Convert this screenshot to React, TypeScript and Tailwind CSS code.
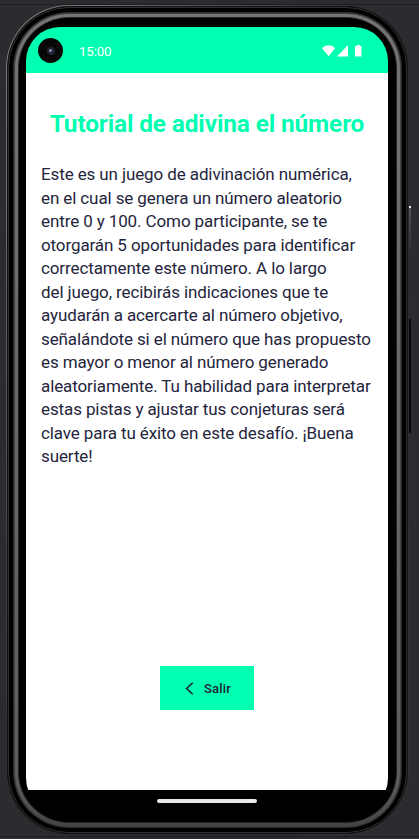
import React from "react";

const LINES = [
  "Este es un juego de adivinación numérica,",
  "en el cual se genera un número aleatorio",
  "entre 0 y 100. Como participante, se te",
  "otorgarán 5 oportunidades para identificar",
  "correctamente este número. A lo largo",
  "del juego, recibirás indicaciones que te",
  "ayudarán a acercarte al número objetivo,",
  "señalándote si el número que has propuesto",
  "es mayor o menor al número generado",
  "aleatoriamente. Tu habilidad para interpretar",
  "estas pistas y ajustar tus conjeturas será",
  "clave para tu éxito en este desafío. ¡Buena",
  "suerte!",
];

function StatusBar() {
  return (
    <header className="flex h-[46px] shrink-0 items-center bg-[#00ffb0] pl-3 pr-[25px] text-white">
      <div className="mt-[1px] flex size-[25px] items-center justify-center rounded-full bg-[#080808]">
        <div className="flex size-[8px] items-center justify-center rounded-full bg-[#202332]">
          <div className="size-[3px] rounded-full bg-[#8490b5]" />
        </div>
      </div>
      <span className="ml-4 mt-[3px] text-[13.3px] leading-4 tracking-[-0.15px]">15:00</span>
      <svg className="ml-auto mt-[2px]" width="41" height="12" viewBox="0 0 41 12" fill="white">
        <path d="M0 3.2C3.8-.7 9.4-.7 13.2 3.2L6.6 11.3Z" />
        <path d="M26 0V11.6H15Z" />
        <path d="M33.5 1H35V0H38V1H39.5V11.6H33V1Z" />
      </svg>
    </header>
  );
}

function Screen() {
  return (
    <div className="flex h-[785px] w-[362px] flex-col overflow-hidden rounded-[34px] bg-black">
      <StatusBar />
      <main className="flex h-[717px] shrink-0 flex-col items-center bg-white">
        <h1 className="mt-9 whitespace-nowrap text-[24.4px] font-bold leading-[30px] tracking-[-0.12px] text-[#00ffb0]">
          Tutorial de adivina el número
        </h1>
        <p className="mt-6 w-full pl-[15px] text-[17px] leading-[23.5px] tracking-[-0.11px] text-[#24253d]">
          {LINES.map((line) => (
            <span key={line} className="block whitespace-nowrap">{line}</span>
          ))}
        </p>
        <button className="mb-20 mt-auto flex h-11 w-[94px] items-center bg-[#00ffb0] pl-[25px] text-[13px] font-medium tracking-[0.2px] text-[#20213a]">
          <svg width="9" height="13" viewBox="0 0 8 12" fill="none" stroke="currentColor" strokeWidth="1.4">
            <path d="M7 .7 1.3 6 7 11.3" />
          </svg>
          <span className="ml-[10px] mt-[2px]">Salir</span>
        </button>
      </main>
      <footer className="flex flex-1 justify-center bg-black pt-[9px]">
        <div className="h-1 w-[100px] rounded-full bg-[#ebe9e9]" />
      </footer>
    </div>
  );
}

export default function App() {
  return (
    <div className="relative h-[839px] w-[419px] overflow-hidden bg-[#2b2c30] font-['Roboto',sans-serif]">
      <div className="h-[5px] border-b border-[#1c1d20]" />
      <div className="ml-[6px] h-[830px] w-[403px] rounded-[63px] bg-linear-to-br from-[#858583] via-[#292929] to-[#343434] p-[1px]">
        <div className="h-full rounded-[62px] bg-[#111111] p-[1px]">
          <div className="h-full rounded-[61px] border border-[#303030] bg-black p-[4px]">
            <div className="h-full rounded-[56px] bg-[#2c2c2c] p-[1px]">
              <div className="h-full rounded-[55px] bg-[#404040] p-[1px]">
                <div className="h-full rounded-[54px] bg-linear-to-b from-[#747474] via-[#5c5c5c] via-95% to-[#454545] p-[3px]">
                  <div className="h-full rounded-[51px] bg-[#242424] p-[1px]">
                    <div className="h-full rounded-[50px] bg-black pl-[7px] pt-[9px]">
                      <Screen />
                    </div>
                  </div>
                </div>
              </div>
            </div>
          </div>
        </div>
      </div>
      <div className="h-px bg-[#2b2c30]" />
      <div className="h-px bg-[#1c1d20]" />
      <div className="absolute left-[409px] top-[206px] h-[53px] w-[2px] bg-linear-to-b from-[#555555] to-[#292929]">
        <div className="h-[2px] bg-[#eeeeee]" />
      </div>
      <div className="absolute left-[409px] top-[319px] h-[114px] w-[2px] bg-[#090909]" />
    </div>
  );
}
